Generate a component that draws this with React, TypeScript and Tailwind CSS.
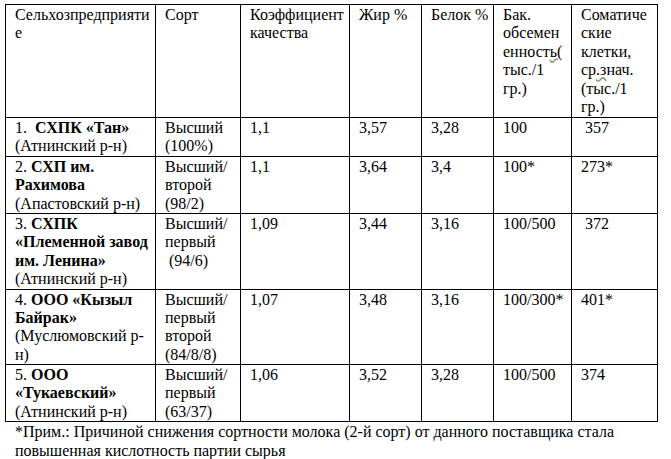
const ff = "font-['Liberation_Serif']";
const cell = `${ff} border border-black align-top pl-[9px] pr-1 pt-px whitespace-nowrap`;

const Squiggle = ({ children }: { children: React.ReactNode }) => (
  <span className={`${ff} underline decoration-wavy decoration-[#7aa06a]`}>{children}</span>
);

const B = ({ children }: { children: React.ReactNode }) => <b className={`${ff} font-bold`}>{children}</b>;

const rows = [
  {
    h: "h-[36px]",
    name: (
      <>
        1.&nbsp; <B>СХПК «Тан»</B>
        <br />
        (Атнинский р-н)
      </>
    ),
    sort: (
      <>
        Высший
        <br />
        (100%)
      </>
    ),
    k: "1,1",
    fat: "3,57",
    protein: "3,28",
    bak: "100",
    som: "\u00a0357",
  },
  {
    h: "h-[56px]",
    name: (
      <>
        2. <B>СХП им.</B>
        <br />
        <B>Рахимова</B>
        <br />
        (Апастовский р-н)
      </>
    ),
    sort: (
      <>
        Высший/
        <br />
        второй
        <br />
        (98/2)
      </>
    ),
    k: "1,1",
    fat: "3,64",
    protein: "3,4",
    bak: "100*",
    som: "273*",
  },
  {
    h: "h-[74px]",
    name: (
      <>
        3. <B>СХПК</B>
        <br />
        <B>«Племенной завод</B>
        <br />
        <B>им. Ленина»</B>
        <br />
        (Атнинский р-н)
      </>
    ),
    sort: (
      <>
        Высший/
        <br />
        первый
        <br />
        &nbsp;(94/6)
      </>
    ),
    k: "1,09",
    fat: "3,44",
    protein: "3,16",
    bak: "100/500",
    som: "\u00a0372",
  },
  {
    h: "h-[75px]",
    name: (
      <>
        4. <B>ООО «Кызыл</B>
        <br />
        <B>Байрак»</B>
        <br />
        (Муслюмовский р-
        <br />
        н)
      </>
    ),
    sort: (
      <>
        Высший/
        <br />
        первый
        <br />
        второй
        <br />
        (84/8/8)
      </>
    ),
    k: "1,07",
    fat: "3,48",
    protein: "3,16",
    bak: "100/300*",
    som: "401*",
  },
  {
    h: "h-[55px]",
    name: (
      <>
        5. <B>ООО</B>
        <br />
        <B>«Тукаевский»</B>
        <br />
        (Атнинский р-н)
      </>
    ),
    sort: (
      <>
        Высший/
        <br />
        первый
        <br />
        (63/37)
      </>
    ),
    k: "1,06",
    fat: "3,52",
    protein: "3,28",
    bak: "100/500",
    som: "374",
  },
];

export default function App() {
  return (
    <div className="w-[671px] h-[459px] bg-white text-black font-serif pl-[5px] pt-[4px] text-[16px] leading-[1.15]">
      <table className={`${ff} border-collapse table-fixed w-[652px]`}>
        <colgroup>
          <col className="w-[150px]" />
          <col className="w-[85px]" />
          <col className="w-[109px]" />
          <col className="w-[72px]" />
          <col className="w-[72px]" />
          <col className="w-[78px]" />
          <col className="w-[86px]" />
        </colgroup>
        <tbody>
          <tr className="h-[113px]">
            <td className={cell}>
              Сельхозпредприяти
              <br />е
            </td>
            <td className={cell}>Сорт</td>
            <td className={cell}>
              Коэффициент
              <br />
              качества
            </td>
            <td className={cell}>Жир %</td>
            <td className={cell}>Белок %</td>
            <td className={cell}>
              Бак.
              <br />
              обсемен
              <br />
              енност<Squiggle>ь(</Squiggle>
              <br />
              тыс./1
              <br />
              гр.)
            </td>
            <td className={cell}>
              Соматиче
              <br />
              ские
              <br />
              клетки,
              <br />
              ср<Squiggle>.з</Squiggle>нач.
              <br />
              (тыс./1
              <br />
              гр.)
            </td>
          </tr>
          {rows.map((r, i) => (
            <tr key={i} className={r.h}>
              <td className={cell}>{r.name}</td>
              <td className={cell}>{r.sort}</td>
              <td className={cell}>{r.k}</td>
              <td className={cell}>{r.fat}</td>
              <td className={cell}>{r.protein}</td>
              <td className={cell}>{r.bak}</td>
              <td className={cell}>{r.som}</td>
            </tr>
          ))}
        </tbody>
      </table>
      <p className={`${ff} pl-[10px] leading-[19px] whitespace-nowrap`}>
        *Прим.: Причиной снижения сортности молока (2-й сорт) от данного поставщика стала
        <br />
        повышенная кислотность партии сырья
      </p>
    </div>
  );
}
